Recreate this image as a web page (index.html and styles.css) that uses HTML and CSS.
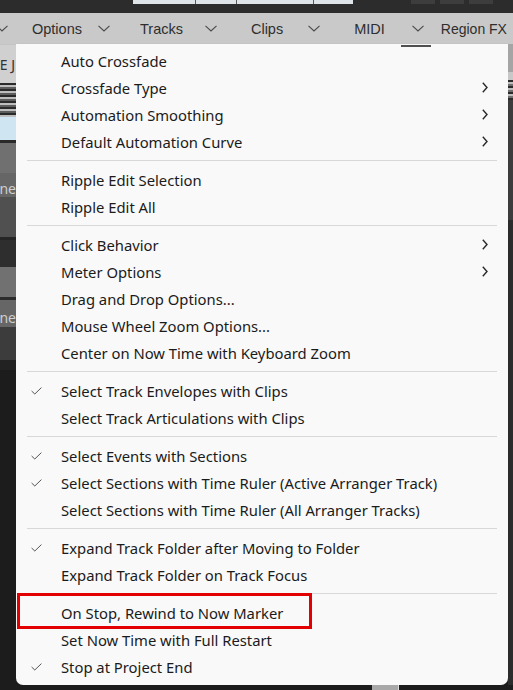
FILE: index.html
```html
<!DOCTYPE html>
<html>
<head>
<meta charset="utf-8">
<link rel="stylesheet" href="styles.css">
</head>
<body>
<div class="screen">
  <div class="topbar">
    <div class="tb-dark tb-a"></div>
    <div class="tb-light">
      <span class="tb-cell c1"></span><span class="tb-cell c2"></span><span class="tb-cell c3"></span><span class="tb-cell c4"></span>
    </div>
    <div class="tb-dark tb-b">
      <span class="tb-box"></span><span class="tb-box"></span><span class="tb-box"></span>
    </div>
  </div>
  <div class="menubar">
    <span class="chev first"><svg viewBox="0 0 12 7"><path d="M0.5 0.8 L6 6 L11.5 0.8"/></svg></span>
    <span class="mb-item options">Options</span>
    <span class="chev"><svg viewBox="0 0 12 7"><path d="M0.5 0.8 L6 6 L11.5 0.8"/></svg></span>
    <span class="mb-item tracks">Tracks</span>
    <span class="chev"><svg viewBox="0 0 12 7"><path d="M0.5 0.8 L6 6 L11.5 0.8"/></svg></span>
    <span class="mb-item clips">Clips</span>
    <span class="chev"><svg viewBox="0 0 12 7"><path d="M0.5 0.8 L6 6 L11.5 0.8"/></svg></span>
    <span class="mb-item midi">MIDI</span>
    <span class="chev under"><svg viewBox="0 0 12 7"><path d="M0.5 0.8 L6 6 L11.5 0.8"/></svg></span>
    <span class="mb-item region">Region FX</span>
  </div>
  <div class="body-row">
    <div class="left-strip">
      <div class="ls ls1"></div>
      <div class="ls ls2"><span class="ls-text">E J</span></div>
      <div class="ls ls3"></div>
      <div class="ls ls4"></div>
      <div class="ls ls5"></div>
      <div class="ls ls6"></div>
      <div class="ls ls7"><span class="ls-text light">one</span></div>
      <div class="ls ls8"></div>
      <div class="ls ls9"></div>
      <div class="ls ls10"></div>
      <div class="ls ls11"></div>
      <div class="ls ls12"></div>
      <div class="ls ls13"><span class="ls-text light">one</span></div>
      <div class="ls ls14"></div>
      <div class="ls ls15"></div>
    </div>
    <div class="menu">
      <div class="item"><span class="check"></span><span class="label">Auto Crossfade</span></div>
      <div class="item"><span class="check"></span><span class="label">Crossfade Type</span><span class="arrow"><svg viewBox="0 0 6 11"><path d="M0.8 0.8 L5 5.5 L0.8 10.2"/></svg></span></div>
      <div class="item"><span class="check"></span><span class="label">Automation Smoothing</span><span class="arrow"><svg viewBox="0 0 6 11"><path d="M0.8 0.8 L5 5.5 L0.8 10.2"/></svg></span></div>
      <div class="item"><span class="check"></span><span class="label">Default Automation Curve</span><span class="arrow"><svg viewBox="0 0 6 11"><path d="M0.8 0.8 L5 5.5 L0.8 10.2"/></svg></span></div>
      <div class="sep"></div>
      <div class="item"><span class="check"></span><span class="label">Ripple Edit Selection</span></div>
      <div class="item"><span class="check"></span><span class="label">Ripple Edit All</span></div>
      <div class="sep"></div>
      <div class="item"><span class="check"></span><span class="label">Click Behavior</span><span class="arrow"><svg viewBox="0 0 6 11"><path d="M0.8 0.8 L5 5.5 L0.8 10.2"/></svg></span></div>
      <div class="item"><span class="check"></span><span class="label">Meter Options</span><span class="arrow"><svg viewBox="0 0 6 11"><path d="M0.8 0.8 L5 5.5 L0.8 10.2"/></svg></span></div>
      <div class="item"><span class="check"></span><span class="label">Drag and Drop Options...</span></div>
      <div class="item"><span class="check"></span><span class="label">Mouse Wheel Zoom Options...</span></div>
      <div class="item"><span class="check"></span><span class="label">Center on Now Time with Keyboard Zoom</span></div>
      <div class="sep"></div>
      <div class="item"><span class="check"><svg viewBox="0 0 11 8"><path d="M0.6 4 L3.8 7 L10.4 0.6"/></svg></span><span class="label">Select Track Envelopes with Clips</span></div>
      <div class="item"><span class="check"></span><span class="label">Select Track Articulations with Clips</span></div>
      <div class="sep"></div>
      <div class="item"><span class="check"><svg viewBox="0 0 11 8"><path d="M0.6 4 L3.8 7 L10.4 0.6"/></svg></span><span class="label">Select Events with Sections</span></div>
      <div class="item"><span class="check"><svg viewBox="0 0 11 8"><path d="M0.6 4 L3.8 7 L10.4 0.6"/></svg></span><span class="label">Select Sections with Time Ruler (Active Arranger Track)</span></div>
      <div class="item"><span class="check"></span><span class="label">Select Sections with Time Ruler (All Arranger Tracks)</span></div>
      <div class="sep"></div>
      <div class="item"><span class="check"><svg viewBox="0 0 11 8"><path d="M0.6 4 L3.8 7 L10.4 0.6"/></svg></span><span class="label">Expand Track Folder after Moving to Folder</span></div>
      <div class="item"><span class="check"></span><span class="label">Expand Track Folder on Track Focus</span></div>
      <div class="sep"></div>
      <div class="item"><span class="check"></span><span class="label">On Stop, Rewind to Now Marker</span></div>
      <div class="item"><span class="check"></span><span class="label">Set Now Time with Full Restart</span></div>
      <div class="item"><span class="check"><svg viewBox="0 0 11 8"><path d="M0.6 4 L3.8 7 L10.4 0.6"/></svg></span><span class="label">Stop at Project End</span></div>
    </div>
    <div class="right-strip">
      <div class="rs rs1"></div>
      <div class="rs rs2"></div>
      <div class="rs rs3"></div>
      <div class="rs rs4"></div>
      <div class="rs rs5"></div>
    </div>
  </div>
  <div class="bottom-row">
    <span class="bottom-gray"></span>
  </div>
  <div class="highlight"></div>
</div>
</body>
</html>
```

FILE: styles.css
```css
html, body {
  margin: 0;
  padding: 0;
  background: #1c1c1c;
}
.screen {
  position: relative;
  width: 513px;
  height: 690px;
  overflow: hidden;
  background: #1c1c1c;
  font-family: "Noto Sans", "Open Sans", sans-serif;
}
.topbar {
  height: 13px;
  display: flex;
  background: #2c2c2c;
}
.tb-dark { background: #2c2c2c; }
.tb-a { width: 133px; }
.tb-light {
  width: 220px;
  height: 4px;
  display: flex;
  background: #dfe4e8;
}
.tb-cell { height: 4px; border-right: 1px solid #5a5a5a; }
.c1 { width: 62px; }
.c2 { width: 40px; }
.c3 { width: 76px; }
.c4 { width: 38px; border-right: none; }
.tb-b {
  flex: 1;
  display: flex;
  gap: 5px;
  padding-left: 58px;
}
.tb-box { width: 24px; height: 4px; background: #3d3d3d; }
.menubar {
  height: 31px;
  background: #c9c9c9;
  display: flex;
  align-items: center;
  font-family: "Liberation Sans", Arial, sans-serif;
  font-size: 14.5px;
  color: #2e2e2e;
  white-space: nowrap;
}
.chev {
  display: inline-flex;
  width: 12px;
  height: 7px;
  position: relative;
}
.chev svg { width: 12px; height: 7px; display: block; }
.chev path { fill: none; stroke: #4a4a4a; stroke-width: 1.1; }
.chev.first { margin-left: -4px; }
.options { margin-left: 24px; }
.tracks { margin-left: 30px; }
.clips { margin-left: 34px; }
.midi { margin-left: 34px; }
.region { margin-left: 17px; font-size: 14px; }
.chev.under::after {
  content: "";
  position: absolute;
  left: -11px;
  right: -7px;
  top: 20px;
  height: 1.5px;
  background: #505050;
}
.options + .chev { margin-left: 16px; }
.tracks + .chev { margin-left: 22px; }
.clips + .chev { margin-left: 25px; }
.midi + .chev { margin-left: 27px; }

.body-row {
  display: flex;
  height: 641px;
}
.left-strip {
  width: 16px;
  display: flex;
  flex-direction: column;
  background: #1c1c1c;
  overflow: hidden;
}
.ls { width: 16px; position: relative; flex: none; }
.ls1 { height: 1px; background: #c4c4c4; }
.ls2 { height: 38px; background: #d0d0d0; }
.ls3 { height: 34px; background: repeating-linear-gradient(#2a2a2a 0 2px, #bdbdbd 2px 4px, #5c5c5c 4px 6px); }
.ls4 { height: 23px; background: #cfe6f2; }
.ls5 { height: 3px; background: #2a2a2a; }
.ls6 { height: 30px; background: #707070; }
.ls7 { height: 24px; background: #666666; }
.ls8 { height: 40px; background: #505050; }
.ls9 { height: 3px; background: #252525; }
.ls10 { height: 27px; background: #2e2e2e; }
.ls11 { height: 30px; background: #717171; }
.ls12 { height: 3px; background: #2c2c2c; }
.ls13 { height: 27px; background: #666666; }
.ls14 { height: 33px; background: #3c3c3c; }
.ls15 { height: 10px; background: #222; }
.ls-text {
  position: absolute;
  right: 1px;
  top: 50%;
  transform: translateY(-50%);
  font-size: 14px;
  color: #333;
  white-space: nowrap;
}
.ls-text.light { color: #cfcfcf; right: 0; top: 62%; }

.menu {
  width: 492px;
  height: 641px;
  box-sizing: border-box;
  background: #f9f9f9;
  border-radius: 0 0 7px 7px;
  padding-top: 3px;
  box-shadow: 1px 0 1px rgba(0,0,0,0.25);
  color: #1b1b1b;
  font-size: 14.8px;
}
.item {
  height: 27px;
  display: flex;
  align-items: center;
  white-space: nowrap;
}
.check {
  width: 45px;
  display: flex;
  justify-content: flex-start;
  padding-left: 15px;
  box-sizing: border-box;
}
.check svg { width: 11px; height: 8px; display: block; }
.check path { fill: none; stroke: #555; stroke-width: 1; }
.label { flex: 1; }
.arrow {
  width: 6px;
  margin-right: 20px;
  display: flex;
}
.arrow svg { width: 6px; height: 11px; display: block; }
.arrow path { fill: none; stroke: #2a2a2a; stroke-width: 1.4; }
.sep {
  height: 11px;
  display: flex;
  align-items: center;
  padding: 0 11px;
}
.sep::before {
  content: "";
  flex: 1;
  height: 1px;
  background: #d8d8d8;
}
.right-strip {
  width: 5px;
  display: flex;
  flex-direction: column;
}
.rs { width: 5px; }
.rs1 { height: 28px; background: #a5a5a5; }
.rs2 { height: 8px; background: #c8c8c8; }
.rs3 { height: 20px; background: repeating-linear-gradient(#2a2a2a 0 2px, #bdbdbd 2px 4px, #707070 4px 6px); }
.rs4 { height: 120px; background: #3c3c3c; }
.rs5 { flex: 1; background: #2c2c2c; }
.bottom-row {
  height: 5px;
  background: #1c1c1c;
  position: relative;
}
.bottom-gray {
  position: absolute;
  left: 372px;
  top: 0;
  width: 26px;
  height: 5px;
  background: #a8a8a8;
  border-right: 1px solid #ddd;
}
.highlight {
  position: absolute;
  left: 17px;
  top: 593px;
  width: 289px;
  height: 30px;
  border: 3px solid #e20000;
}
```
